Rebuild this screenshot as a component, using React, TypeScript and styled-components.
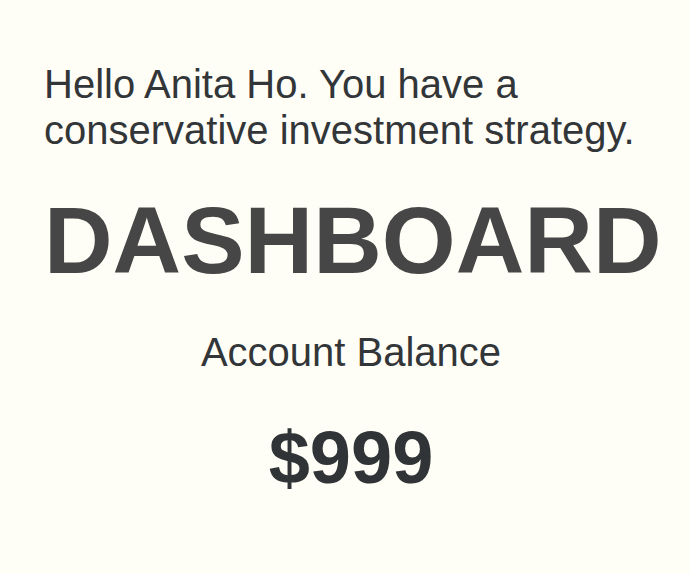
import React from "react";
import styled, { createGlobalStyle } from "styled-components";

const Global = createGlobalStyle`
  html, body { margin: 0; padding: 0; background: #fffef6; }
  body { font-family: "Liberation Sans", Arial, sans-serif; }
`;

const Page = styled.main`
  box-sizing: border-box;
  width: 690px;
  min-height: 573px;
  padding: 61px 32px 0 44px;
  display: flex;
  flex-direction: column;
`;

const Greeting = styled.p`
  margin: 0;
  font-size: 40px;
  line-height: 46px;
  color: #333639;
`;

const Title = styled.h1`
  margin: 34px 0 0;
  font-size: 95px;
  line-height: 106px;
  font-weight: 700;
  color: #464646;
  white-space: nowrap;
`;

const Label = styled.h2`
  margin: 36px 0 0;
  font-size: 40px;
  line-height: 46px;
  font-weight: 400;
  color: #333639;
  text-align: center;
`;

const Amount = styled.div`
  margin: 40px 0 0;
  font-size: 74px;
  line-height: 85px;
  font-weight: 700;
  color: #303437;
  text-align: center;
`;

export default function App() {
  return (
    <>
      <Global />
      <Page>
        <Greeting>Hello Anita Ho. You have a conservative investment strategy.</Greeting>
        <Title>DASHBOARD</Title>
        <Label>Account Balance</Label>
        <Amount>$999</Amount>
      </Page>
    </>
  );
}
